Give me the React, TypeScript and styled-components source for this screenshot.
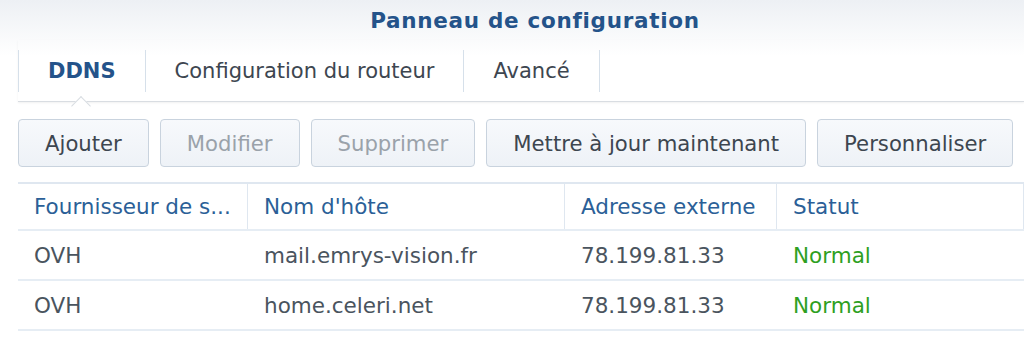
import React from "react";
import styled, { createGlobalStyle } from "styled-components";

const Global = createGlobalStyle`
  html, body { margin: 0; padding: 0; background: #ffffff; }
  body { font-family: "DejaVu Sans", Verdana, sans-serif; }
  * { box-sizing: border-box; }
`;

const Page = styled.div`
  width: 1024px;
  height: 339px;
  overflow: hidden;
  background: linear-gradient(to bottom, #edf0f4 0px, #ffffff 56px);
`;

const TitleBar = styled.div`
  height: 40px;
  display: flex;
  align-items: center;
  justify-content: center;
  padding-left: 46px;
`;

const Title = styled.h1`
  margin: 0;
  font-family: "DejaVu Sans", sans-serif;
  font-weight: bold;
  font-size: 21.5px;
  color: #24538a;
  letter-spacing: 0.7px;
`;

const Body = styled.div`
  padding-left: 18px;
`;

const TabBar = styled.div`
  position: relative;
  display: flex;
  height: 62px;
  padding-top: 10px;
  border-bottom: 1px solid #d9dde2;
  box-shadow: 0 1px 2px rgba(0, 0, 0, 0.06);
`;

const Tab = styled.div<{ $active?: boolean }>`
  position: relative;
  height: 42px;
  display: flex;
  align-items: center;
  padding: 0 29px;
  border-left: 1px solid #d6e0ea;
  font-family: "DejaVu Sans", sans-serif;
  font-size: 21px;
  font-weight: ${(p) => (p.$active ? "bold" : "normal")};
  color: ${(p) => (p.$active ? "#24538a" : "#3d4650")};
  &:last-child { border-right: 1px solid #d6e0ea; }
`;

const Caret = styled.span`
  position: absolute;
  left: 55px;
  bottom: -21px;
  width: 14px;
  height: 14px;
  background: #ffffff;
  border-left: 1px solid #d9dde2;
  border-top: 1px solid #d9dde2;
  transform: rotate(45deg);
`;

const Toolbar = styled.div`
  display: flex;
  gap: 11px;
  padding-top: 17px;
`;

const Button = styled.button<{ $disabled?: boolean }>`
  height: 48px;
  padding: 0 26px;
  border: 1px solid #c9d3de;
  border-radius: 4px;
  background: linear-gradient(to bottom, #f7f9fc, #eef2f7);
  font-family: "DejaVu Sans", Verdana, sans-serif;
  font-size: 21.2px;
  color: ${(p) => (p.$disabled ? "#9aa2aa" : "#3d4650")};
  cursor: default;
`;

const Table = styled.div`
  margin-top: 15px;
  border-top: 2px solid #dfe7f0;
`;

const Row = styled.div<{ $header?: boolean }>`
  display: grid;
  grid-template-columns: 230px 317px 212px 1fr;
  height: ${(p) => (p.$header ? "47px" : "50px")};
  border-bottom: 2px solid #e6edf4;
`;

const Cell = styled.div<{ $header?: boolean; $tone?: "green" }>`
  display: flex;
  align-items: center;
  padding-left: 16px;
  font-size: 21.5px;
  white-space: nowrap;
  overflow: hidden;
  color: ${(p) => (p.$header ? "#2b5f97" : p.$tone === "green" ? "#2ea01f" : "#4a545e")};
  border-right: ${(p) => (p.$header ? "1px solid #dfe7f0" : "none")};
`;

const rows = [
  ["OVH", "mail.emrys-vision.fr", "78.199.81.33", "Normal"],
  ["OVH", "home.celeri.net", "78.199.81.33", "Normal"],
];

export default function App() {
  return (
    <Page>
      <Global />
      <TitleBar>
        <Title>Panneau de configuration</Title>
      </TitleBar>
      <Body>
        <TabBar>
          <Tab $active>
            DDNS
            <Caret />
          </Tab>
          <Tab>Configuration du routeur</Tab>
          <Tab>Avancé</Tab>
        </TabBar>
        <Toolbar>
          <Button>Ajouter</Button>
          <Button $disabled>Modifier</Button>
          <Button $disabled>Supprimer</Button>
          <Button>Mettre à jour maintenant</Button>
          <Button>Personnaliser</Button>
        </Toolbar>
        <Table>
          <Row $header>
            <Cell $header>Fournisseur de s...</Cell>
            <Cell $header>Nom d'hôte</Cell>
            <Cell $header>Adresse externe</Cell>
            <Cell $header>Statut</Cell>
          </Row>
          {rows.map((r, i) => (
            <Row key={i}>
              <Cell>{r[0]}</Cell>
              <Cell>{r[1]}</Cell>
              <Cell>{r[2]}</Cell>
              <Cell $tone="green">{r[3]}</Cell>
            </Row>
          ))}
        </Table>
      </Body>
    </Page>
  );
}
